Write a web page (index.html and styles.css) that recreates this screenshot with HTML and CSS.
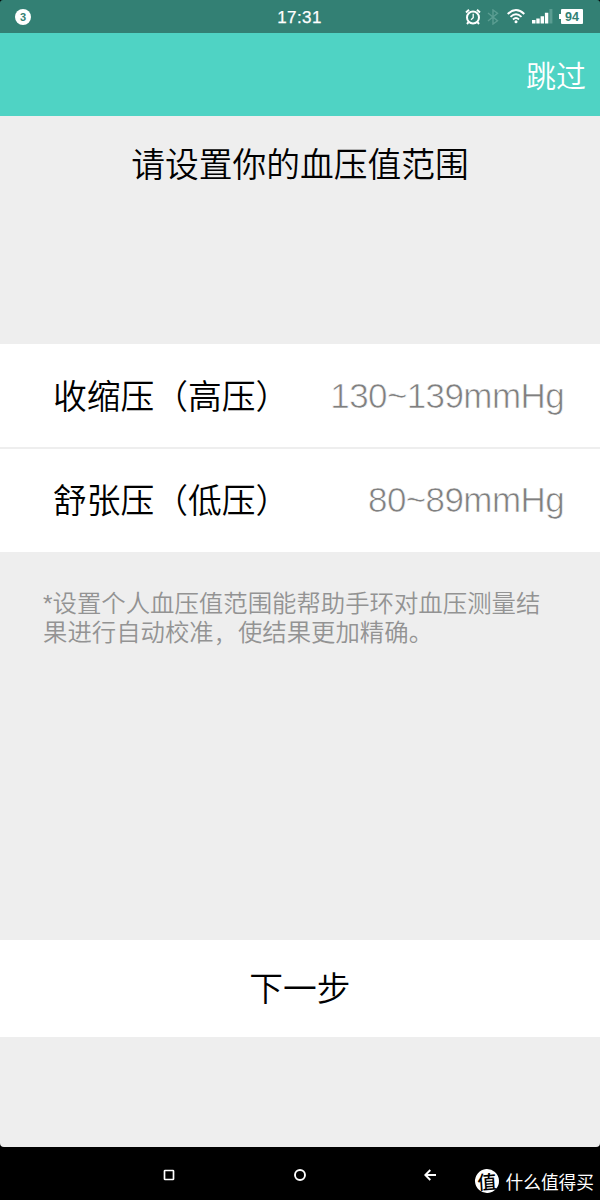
FILE: index.html
```html
<!DOCTYPE html>
<html lang="zh-CN">
<head>
<meta charset="utf-8">
<title>血压值范围</title>
<link rel="stylesheet" href="styles.css">
</head>
<body>
<div class="phone">
  <header class="status">
    <div class="status-left"><span class="count">3</span></div>
    <time class="clock">17:31</time>
    <div class="status-right">
      <svg class="alarm" width="16" height="18" viewBox="0 0 16 18" fill="none" stroke="#fff">
        <circle cx="8" cy="9.5" r="6" stroke-width="2"/>
        <path d="M8.2 5.8v4L6 11.7" stroke-width="1.3"/>
        <path d="M1 4.4 4 1.8M15 4.4 12 1.8M3.5 14.2 2 16M12.5 14.2 14 16" stroke-width="2"/>
      </svg>
      <svg class="bluetooth" width="12" height="16" viewBox="0 0 12 16" fill="none" stroke="#5b9d92" stroke-width="1.4">
        <path d="M1 4 10.5 11.7 6 15V1l4.500 3.300L1 12"/>
      </svg>
      <svg class="wifi" width="18" height="15" viewBox="0 0 18 15" fill="none" stroke="#fff" stroke-width="1.9">
        <path d="M.7 5Q9-2.800 17.300 5M3.500 7.900Q9 2.700 14.500 7.900M6 10.500Q9 7.700 12 10.500"/>
        <circle cx="9" cy="12.800" r="1.500" fill="#fff" stroke="none"/>
      </svg>
      <svg class="signal" width="22" height="15" viewBox="0 0 22 15" fill="#fff">
        <path d="M0 11h3.500v3.500H0zM4.300 9.500h3.400v5h-3.400zM8.600 7.200H12v7.300H8.600zM12.900 3.800h3.400v10.700h-3.400z"/>
        <path d="M17.400 0h3v14.500h-3z" fill="#5b9d92"/>
      </svg>
      <span class="battery">94</span>
    </div>
  </header>
  <nav class="topbar"><span class="skip">跳过</span></nav>
  <main class="content">
    <h1 class="title">请设置你的血压值范围</h1>
    <section class="list">
      <div class="row"><span class="label">收缩压（高压）</span><span class="value">130~139mmHg</span></div>
      <div class="row"><span class="label">舒张压（低压）</span><span class="value">80~89mmHg</span></div>
    </section>
    <p class="note"><span class="star">*</span>设置个人血压值范围能帮助手环对血压测量结<br>果进行自动校准<span class="comma">,</span>使结果更加精确。</p>
    <div class="next">下一步</div>
  </main>
  <footer class="navbar">
    <svg class="key" width="12" height="12" viewBox="0 0 12 12" fill="none" stroke="#fff" stroke-width="1.700"><rect x="1.500" y="1.500" width="9" height="9" rx=".6"/></svg>
    <svg class="key" width="12" height="12" viewBox="0 0 12 12" fill="none" stroke="#fff" stroke-width="1.900"><circle cx="6" cy="6" r="5"/></svg>
    <svg class="key" width="12" height="12" viewBox="0 0 12 12" fill="none" stroke="#fff" stroke-width="1.900"><path d="M12 6H1.500M6.300 1 1.300 6l5 5"/></svg>
    <div class="watermark"><span class="seal">值</span><span class="brand">什么值得买</span></div>
  </footer>
</div>
</body>
</html>
```
FILE: styles.css
```css
* { box-sizing: border-box; }
body { margin: 0; background: #000; font-family: "Noto Sans CJK SC", sans-serif; }
.phone { width: 600px; height: 1200px; display: flex; flex-direction: column; overflow: hidden; }
.status { height: 33px; flex: none; background: #338074; color: #fff; display: grid; grid-template-columns: 1fr auto 1fr; align-items: center; padding: 0 17px 0 15px; border-radius: 3px 3px 0 0; }
.count { display: block; width: 16px; height: 16px; border-radius: 50%; background: #fff; color: #338074; font: bold 11px/16px "Liberation Sans", sans-serif; text-align: center; }
.clock { font: 17px/20px "Liberation Sans", sans-serif; letter-spacing: .4px; -webkit-text-stroke: .25px #fff; padding: 2px 0 0 1px; }
.status-right { display: flex; justify-content: flex-end; align-items: center; }
.bluetooth { margin-left: 6px; }
.wifi { margin-left: 8px; }
.signal { margin-left: 7px; }
.battery { position: relative; width: 22px; height: 15px; margin-left: 7px; background: #fff; color: #338074; font: bold 12.5px/16px "Liberation Sans", sans-serif; text-align: center; border-radius: 1px; }
.battery::before { content: ""; position: absolute; left: -2px; top: 5px; width: 2px; height: 5px; background: #fff; }
.topbar { height: 83px; flex: none; background: #4fd3c4; display: flex; align-items: center; justify-content: flex-end; padding: 0 14px 1px 0; color: #fff; }
.skip { font-size: 30px; line-height: 40px; font-weight: 350; }
.content { height: 1031px; flex: none; background: #eee; border-radius: 0 0 4px 4px; display: flex; flex-direction: column; }
.title { margin: 0; height: 228px; padding-top: 22px; font-size: 33.75px; line-height: 50px; font-weight: 350; text-align: center; color: #000; }
.row { height: 103px; background: #fff; display: flex; align-items: center; justify-content: space-between; padding: 0 36px 0 53px; }
.row + .row { height: 105px; border-top: 2px solid #eee; padding-bottom: 2px; }
.label { font-size: 33.75px; line-height: 50px; font-weight: 350; white-space: nowrap; color: #000; padding-bottom: 2px; }
.value { font-family: "Liberation Sans", sans-serif; font-size: 35px; letter-spacing: -.6px; color: #808080; -webkit-text-stroke: .65px #fff; white-space: nowrap; }
.note { margin: 35px 0 0; padding-left: 43px; height: 353px; font-size: 24.4px; line-height: 29px; font-weight: 350; color: #939393; white-space: nowrap; }
.star { font-family: "Liberation Sans", sans-serif; line-height: 0; }
.comma { padding-left: 2px; margin-right: 15.6px; }
.next { height: 97px; background: #fff; text-align: center; font-size: 33.75px; line-height: 94px; color: #000; font-weight: 350; }
.navbar { height: 53px; display: grid; grid-template-columns: 12px 12px 12px 1fr; column-gap: 118.5px; align-items: center; padding-left: 163px; }
.key { display: block; margin-top: 2px; }
.watermark { display: flex; align-items: center; margin-left: -80px; margin-top: 15px; white-space: nowrap; color: #fff; }
.seal { width: 24px; height: 24px; border-radius: 50%; background: #fff; color: #000; font-size: 19px; line-height: 23px; font-weight: 500; text-align: center; transform: rotate(-4deg); }
.brand { margin-left: 7px; font-size: 17.7px; line-height: 24px; }
```
